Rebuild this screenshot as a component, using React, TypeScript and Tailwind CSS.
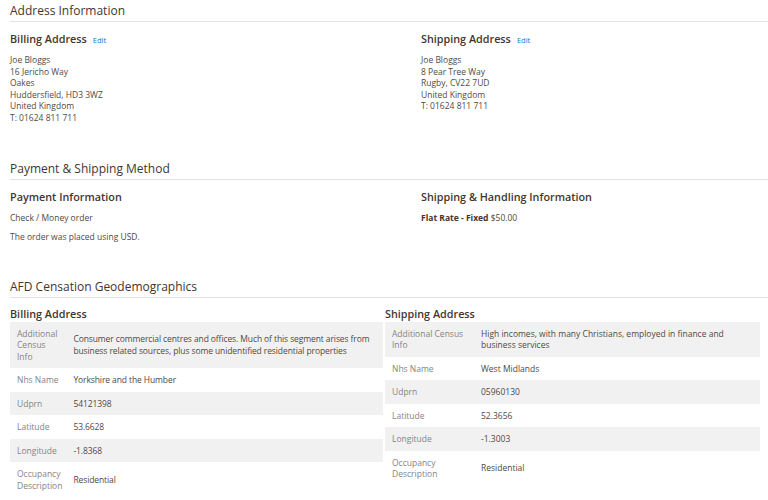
import { FC } from 'react';

interface Row {
  label: string;
  value: string;
}

const billingRows: Row[] = [
  {
    label: 'Additional Census Info',
    value:
      'Consumer commercial centres and offices. Much of this segment arises from business related sources, plus some unidentified residential properties',
  },
  { label: 'Nhs Name', value: 'Yorkshire and the Humber' },
  { label: 'Udprn', value: '54121398' },
  { label: 'Latitude', value: '53.6628' },
  { label: 'Longitude', value: '-1.8368' },
  { label: 'Occupancy Description', value: 'Residential' },
];

const shippingRows: Row[] = [
  {
    label: 'Additional Census Info',
    value: 'High incomes, with many Christians, employed in finance and business services',
  },
  { label: 'Nhs Name', value: 'West Midlands' },
  { label: 'Udprn', value: '05960130' },
  { label: 'Latitude', value: '52.3656' },
  { label: 'Longitude', value: '-1.3003' },
  { label: 'Occupancy Description', value: 'Residential' },
];

const SectionTitle: FC<{ title: string; spacing?: string }> = ({ title, spacing = 'mb-[9px]' }) => (
  <div className={`border-b border-[#e3e3e3] pb-[1px] ${spacing}`}>
    <h2 className="text-[12px] leading-[18px] text-[#41362f]">{title}</h2>
  </div>
);

const ItemTitle: FC<{ title: string; edit?: boolean }> = ({ title, edit }) => (
  <h3 className="text-[10.8px] leading-[16px] font-semibold text-[#41362f]">
    {title}
    {edit && <a className="ml-[6px] text-[7.5px] font-normal text-[#007bdb]">Edit</a>}
  </h3>
);

// value column: left table text runs right up to the edge, right table keeps a small gutter
const CensusTable: FC<{ rows: Row[]; labelWidth: string; valuePad: string }> = ({ rows, labelWidth, valuePad }) => (
  <table className="w-full border-collapse text-[8.5px] leading-[11.5px]">
    <tbody>
      {rows.map((row, i) => (
        <tr key={row.label} className={i % 2 === 0 ? 'bg-[#f1f1f1]' : 'bg-white'}>
          <th className={`${labelWidth} text-left font-normal text-[#858585] align-middle pl-[7px] py-[6px]`}>
            {row.label}
          </th>
          <td className={`${valuePad} text-[#514943] align-middle py-[6px]`}>{row.value}</td>
        </tr>
      ))}
    </tbody>
  </table>
);

const App: FC = () => {
  return (
    <div className="w-[768px] h-[500px] overflow-hidden bg-white pl-[10px] pt-[2px] font-['Open_Sans',sans-serif] text-[#514943]">
      <section>
        <SectionTitle title="Address Information" />
        <div className="grid grid-cols-[411px_1fr]">
          <div>
            <ItemTitle title="Billing Address" edit />
            <address className="not-italic text-[8.5px] leading-[11.6px] mt-[6px]">
              Joe Bloggs<br />16 Jericho Way<br />Oakes<br />Huddersfield, HD3 3WZ<br />United Kingdom<br />T: 01624 811 711
            </address>
          </div>
          <div>
            <ItemTitle title="Shipping Address" edit />
            <address className="not-italic text-[8.5px] leading-[11.6px] mt-[6px]">
              Joe Bloggs<br />8 Pear Tree Way<br />Rugby, CV22 7UD<br />United Kingdom<br />T: 01624 811 711
            </address>
          </div>
        </div>
      </section>

      <section className="mt-[36px]">
        <SectionTitle title="Payment &amp; Shipping Method" />
        <div className="grid grid-cols-[411px_1fr]">
          <div>
            <ItemTitle title="Payment Information" />
            <div className="text-[8.5px] leading-[11px] mt-[7px]">
              <p>Check / Money order</p>
              <p className="mt-[8px]">The order was placed using USD.</p>
            </div>
          </div>
          <div>
            <ItemTitle title="Shipping &amp; Handling Information" />
            <p className="text-[8.5px] leading-[11px] mt-[7px]">
              <strong className="font-bold text-[#41362f]">Flat Rate - Fixed</strong> $50.00
            </p>
          </div>
        </div>
      </section>

      <section className="mt-[36px]">
        <SectionTitle title="AFD Censation Geodemographics" spacing="mb-[8px]" />
        <div className="grid grid-cols-[373px_375px] gap-[2px]">
          <div>
            <ItemTitle title="Billing Address" />
            <CensusTable rows={billingRows} labelWidth="w-[63px] pr-[11px]" valuePad="pr-0 tracking-[-0.1px]" />
          </div>
          <div>
            <ItemTitle title="Shipping Address" />
            <CensusTable rows={shippingRows} labelWidth="w-[96px] pr-[8px]" valuePad="pr-[4px]" />
          </div>
        </div>
      </section>
    </div>
  );
};

export default App;
